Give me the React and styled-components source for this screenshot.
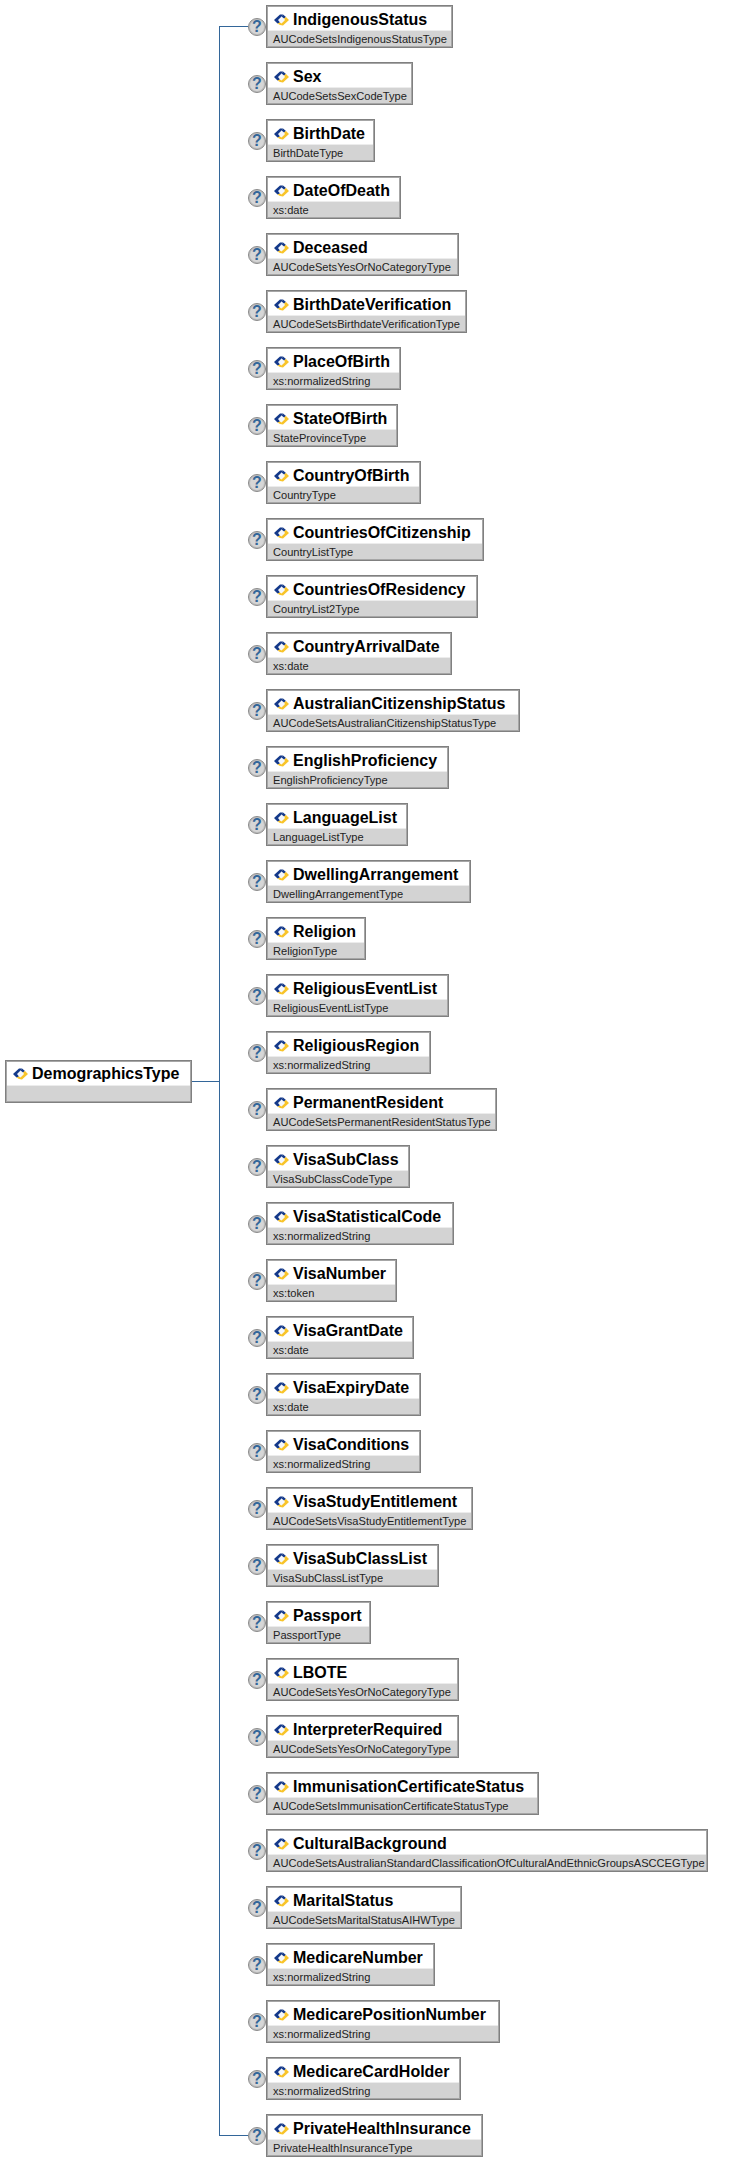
import React from 'react';
import styled, { createGlobalStyle } from 'styled-components';

const GlobalStyle = createGlobalStyle`
  html, body {
    margin: 0;
    background: #fff;
  }
`;

const LINE = '#336699';

const Diagram = styled.div`
  display: flex;
  align-items: center;
  padding: 5px 0 4px 5px;
  font-family: "Liberation Sans", Arial, sans-serif;
`;

const Card = styled.div`
  box-sizing: border-box;
  flex: none;
  width: ${(props) => props.width}px;
  height: 43px;
  display: flex;
  flex-direction: column;
  border: 1px solid #808080;
  box-shadow: inset 0 0 0 1px #a6a6a6;
  background: #d3d3d3;
`;

const CardTitle = styled.div`
  display: flex;
  align-items: center;
  gap: 4px;
  height: 24px;
  margin: 1px 1px 0;
  padding: 2px 0 0 6px;
  box-sizing: border-box;
  background: #fff;
  border-bottom: 1px solid #ececec;
  font-size: 16px;
  font-weight: bold;
  line-height: 20px;
  color: #000;
  white-space: nowrap;
`;

const CardType = styled.div`
  padding-left: 6px;
  font-size: 11.1px;
  line-height: 16px;
  color: #222;
  white-space: nowrap;
`;

const RootLink = styled.div`
  flex: none;
  width: 27px;
  height: 1px;
  background: ${LINE};
`;

const ChildList = styled.div`
  position: relative;
  display: flex;
  flex-direction: column;
  gap: 14px;

  &::before {
    content: '';
    position: absolute;
    left: 0;
    top: 21px;
    bottom: 21px;
    width: 1px;
    background: ${LINE};
  }
`;

const ChildRow = styled.div`
  display: flex;
  align-items: flex-start;
`;

const Stub = styled.div`
  flex: none;
  width: 29px;
  height: 1px;
  margin-top: 21px;
  background: ${(props) => (props.$end ? LINE : 'transparent')};
`;

const OptionalBadge = styled.div`
  flex: none;
  box-sizing: border-box;
  width: 18px;
  height: 18px;
  margin-top: 13px;
  border: 1px solid #8a8a8a;
  border-radius: 50%;
  background: #d6d6d6;
  box-shadow: inset 0 0 0 1px #bdbdbd;
  color: ${LINE};
  font-size: 16px;
  font-weight: bold;
  line-height: 16px;
  text-align: center;
`;

const TypeIcon = () => (
  <svg width="15" height="12" viewBox="0 0 15 12" style={{ flex: 'none' }}>
    <polygon points="4,6 7.5,2.5 11,6 7.5,9.5" fill="#f4f7fc" />
    <polygon points="0,6 6,0.5 9,0.5 7.5,2.5 4,6 6,8.5 3.5,9.5" fill="#14398a" />
    <polygon points="9,0.5 12,3 10,4.5 7.5,2.5" fill="#14398a" />
    <polygon points="12,3 15,6 9,11.5 6,11 3.5,9.5 6,8.5 7.5,9.5 11,6 10,4.5" fill="#f8c42a" />
  </svg>
);

const children = [
  ['IndigenousStatus', 'AUCodeSetsIndigenousStatusType', 187],
  ['Sex', 'AUCodeSetsSexCodeType', 147],
  ['BirthDate', 'BirthDateType', 109],
  ['DateOfDeath', 'xs:date', 135],
  ['Deceased', 'AUCodeSetsYesOrNoCategoryType', 193],
  ['BirthDateVerification', 'AUCodeSetsBirthdateVerificationType', 201],
  ['PlaceOfBirth', 'xs:normalizedString', 135],
  ['StateOfBirth', 'StateProvinceType', 132],
  ['CountryOfBirth', 'CountryType', 155],
  ['CountriesOfCitizenship', 'CountryListType', 218],
  ['CountriesOfResidency', 'CountryList2Type', 212],
  ['CountryArrivalDate', 'xs:date', 186],
  ['AustralianCitizenshipStatus', 'AUCodeSetsAustralianCitizenshipStatusType', 254],
  ['EnglishProficiency', 'EnglishProficiencyType', 183],
  ['LanguageList', 'LanguageListType', 142],
  ['DwellingArrangement', 'DwellingArrangementType', 205],
  ['Religion', 'ReligionType', 100],
  ['ReligiousEventList', 'ReligiousEventListType', 183],
  ['ReligiousRegion', 'xs:normalizedString', 165],
  ['PermanentResident', 'AUCodeSetsPermanentResidentStatusType', 231],
  ['VisaSubClass', 'VisaSubClassCodeType', 144],
  ['VisaStatisticalCode', 'xs:normalizedString', 188],
  ['VisaNumber', 'xs:token', 131],
  ['VisaGrantDate', 'xs:date', 148],
  ['VisaExpiryDate', 'xs:date', 155],
  ['VisaConditions', 'xs:normalizedString', 155],
  ['VisaStudyEntitlement', 'AUCodeSetsVisaStudyEntitlementType', 207],
  ['VisaSubClassList', 'VisaSubClassListType', 173],
  ['Passport', 'PassportType', 105],
  ['LBOTE', 'AUCodeSetsYesOrNoCategoryType', 193],
  ['InterpreterRequired', 'AUCodeSetsYesOrNoCategoryType', 193],
  ['ImmunisationCertificateStatus', 'AUCodeSetsImmunisationCertificateStatusType', 273],
  ['CulturalBackground', 'AUCodeSetsAustralianStandardClassificationOfCulturalAndEthnicGroupsASCCEGType', 442],
  ['MaritalStatus', 'AUCodeSetsMaritalStatusAIHWType', 196],
  ['MedicareNumber', 'xs:normalizedString', 169],
  ['MedicarePositionNumber', 'xs:normalizedString', 234],
  ['MedicareCardHolder', 'xs:normalizedString', 195],
  ['PrivateHealthInsurance', 'PrivateHealthInsuranceType', 217],
];

const TypeCard = ({ name, type, width }) => (
  <Card width={width}>
    <CardTitle>
      <TypeIcon />
      {name}
    </CardTitle>
    <CardType>{type}</CardType>
  </Card>
);

const App = () => (
  <>
    <GlobalStyle />
    <Diagram>
      <TypeCard name="DemographicsType" width={187} />
      <RootLink />
      <ChildList>
        {children.map(([name, type, width], i) => (
          <ChildRow key={name}>
            <Stub $end={i === 0 || i === children.length - 1} />
            <OptionalBadge>?</OptionalBadge>
            <TypeCard name={name} type={type} width={width} />
          </ChildRow>
        ))}
      </ChildList>
    </Diagram>
  </>
);

export default App;
